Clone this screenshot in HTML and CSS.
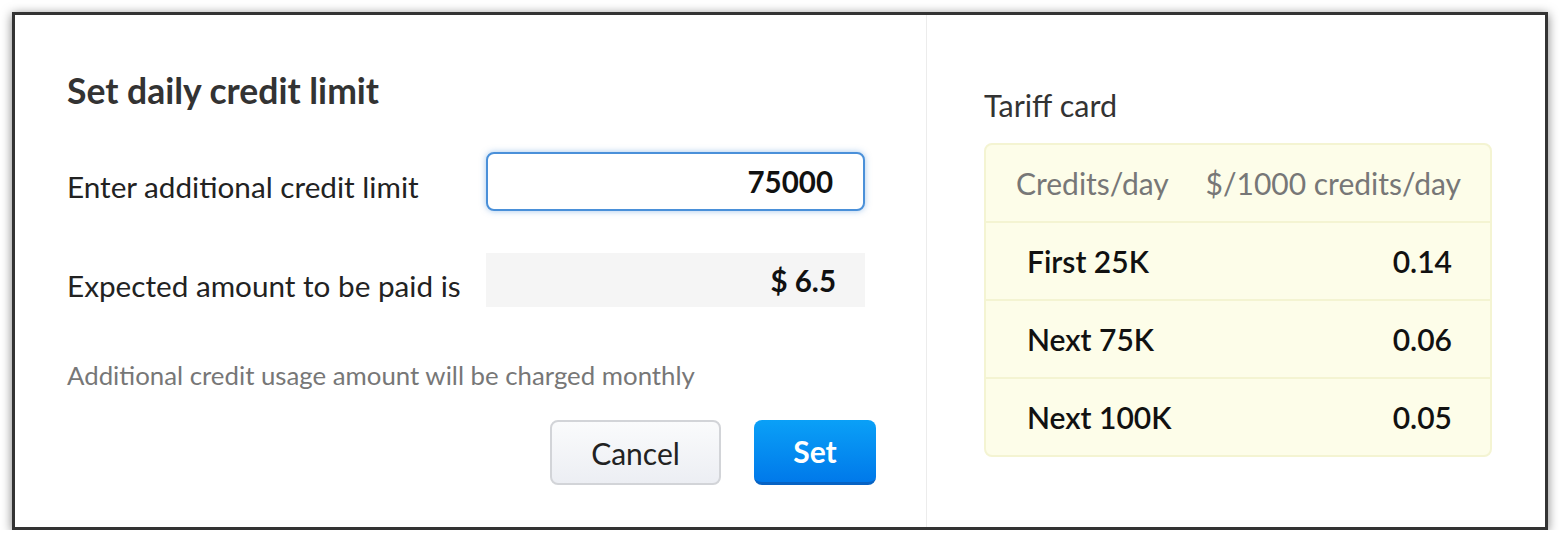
FILE: index.html
```
<!DOCTYPE html>
<html lang="en">
<head>
    <meta charset="UTF-8">
    <title>Set daily credit limit</title>
    <link rel="stylesheet" href="styles.css">
</head>
<body>
<div class="frame">
    <div class="pane-left">
        <h2 class="title">Set daily credit limit</h2>
        <div class="row">
            <label class="lbl" for="credit">Enter additional credit limit</label>
            <input class="inp" id="credit" type="text" value="75000" />
        </div>
        <div class="row row2">
            <span class="lbl">Expected amount to be paid is</span>
            <span class="amount">$ 6.5</span>
        </div>
        <p class="note">Additional credit usage amount will be charged monthly</p>
        <div class="btns">
            <button class="btn btn-cancel">Cancel</button>
            <button class="btn btn-set">Set</button>
        </div>
    </div>
    <div class="pane-right">
        <div class="tariff-title">Tariff card</div>
        <table class="tariff">
            <tr class="head"><td>Credits/day</td><td>$/1000 credits/day</td></tr>
            <tr><td>First 25K</td><td>0.14</td></tr>
            <tr><td>Next 75K</td><td>0.06</td></tr>
            <tr><td>Next 100K</td><td>0.05</td></tr>
        </table>
    </div>
</div>
</body>
</html>
```
FILE: styles.css
```
* {margin:0; padding:0; box-sizing:border-box;}
body {background:#fff; font-family:Lato, "Open Sans", sans-serif; color:#222;}

.frame {width:1536px; height:518px; margin:12px 0 0 12px; border:3px solid #333; background:#fff;
    box-shadow:0 2px 10px rgba(0,0,0,0.5); display:flex;}

.pane-left {width:912px; padding:56px 0 0 52px; border-right:1px solid #ececec;}
.title {font-size:35.5px; line-height:40px; font-weight:700; color:#333; height:40px;}

.row {display:flex; align-items:center; margin-top:41px; height:59px;}
.row2 {margin-top:42px; height:54px;}
.lbl {width:419px; font-size:29.7px; color:#222; padding-top:10px;}
.inp {width:379px; height:59px; border:2px solid #4a90d9; border-radius:8px; box-shadow:0 0 6px rgba(74,144,217,0.5);
    font:700 29.5px Lato, sans-serif; color:#111; text-align:right; padding-right:30px; outline:none;}
.amount {width:379px; height:54px; background:#f5f5f5; font-size:29.5px; font-weight:700; color:#111;
    text-align:right; padding-right:29px; line-height:56px;}

.note {font-size:25.8px; color:#777; margin-top:53px; line-height:30px;}

.btns {display:flex; margin:30px 0 0 483px; gap:33px;}
.btn {height:65px; border-radius:8px; font:30px Lato, sans-serif;}
.btn-cancel {width:171px; color:#222; border:2px solid #d2d4d8; background:linear-gradient(#fafbfc, #eceef3);}
.btn-set {width:122px; color:#fff; font-weight:700; border:none; border-bottom:3px solid #0763c4;
    background:linear-gradient(#0aa0f7, #0079ea);}

.pane-right {flex:1; padding:73px 0 0 57px;}
.tariff-title {font-size:30.5px; color:#333; line-height:34px;}
.tariff {width:508px; margin-top:21px; border-collapse:separate; border-spacing:0; background:#fdfde9;
    border:2px solid #f4f4d2; border-radius:8px; font-size:30px;}
.tariff td {height:78px; border-top:2px solid #f4f4d2; color:#111; font-weight:600;}
.tariff tr:first-child td {border-top:none; height:76px;}
.tariff td:first-child {padding-left:41px;}
.tariff td:last-child {text-align:right; padding-right:38px;}
.tariff .head td {color:#777; font-weight:400; font-size:30px;}
.tariff .head td:first-child {padding-left:30px;}
.tariff .head td:last-child {padding-right:29px;}
```
